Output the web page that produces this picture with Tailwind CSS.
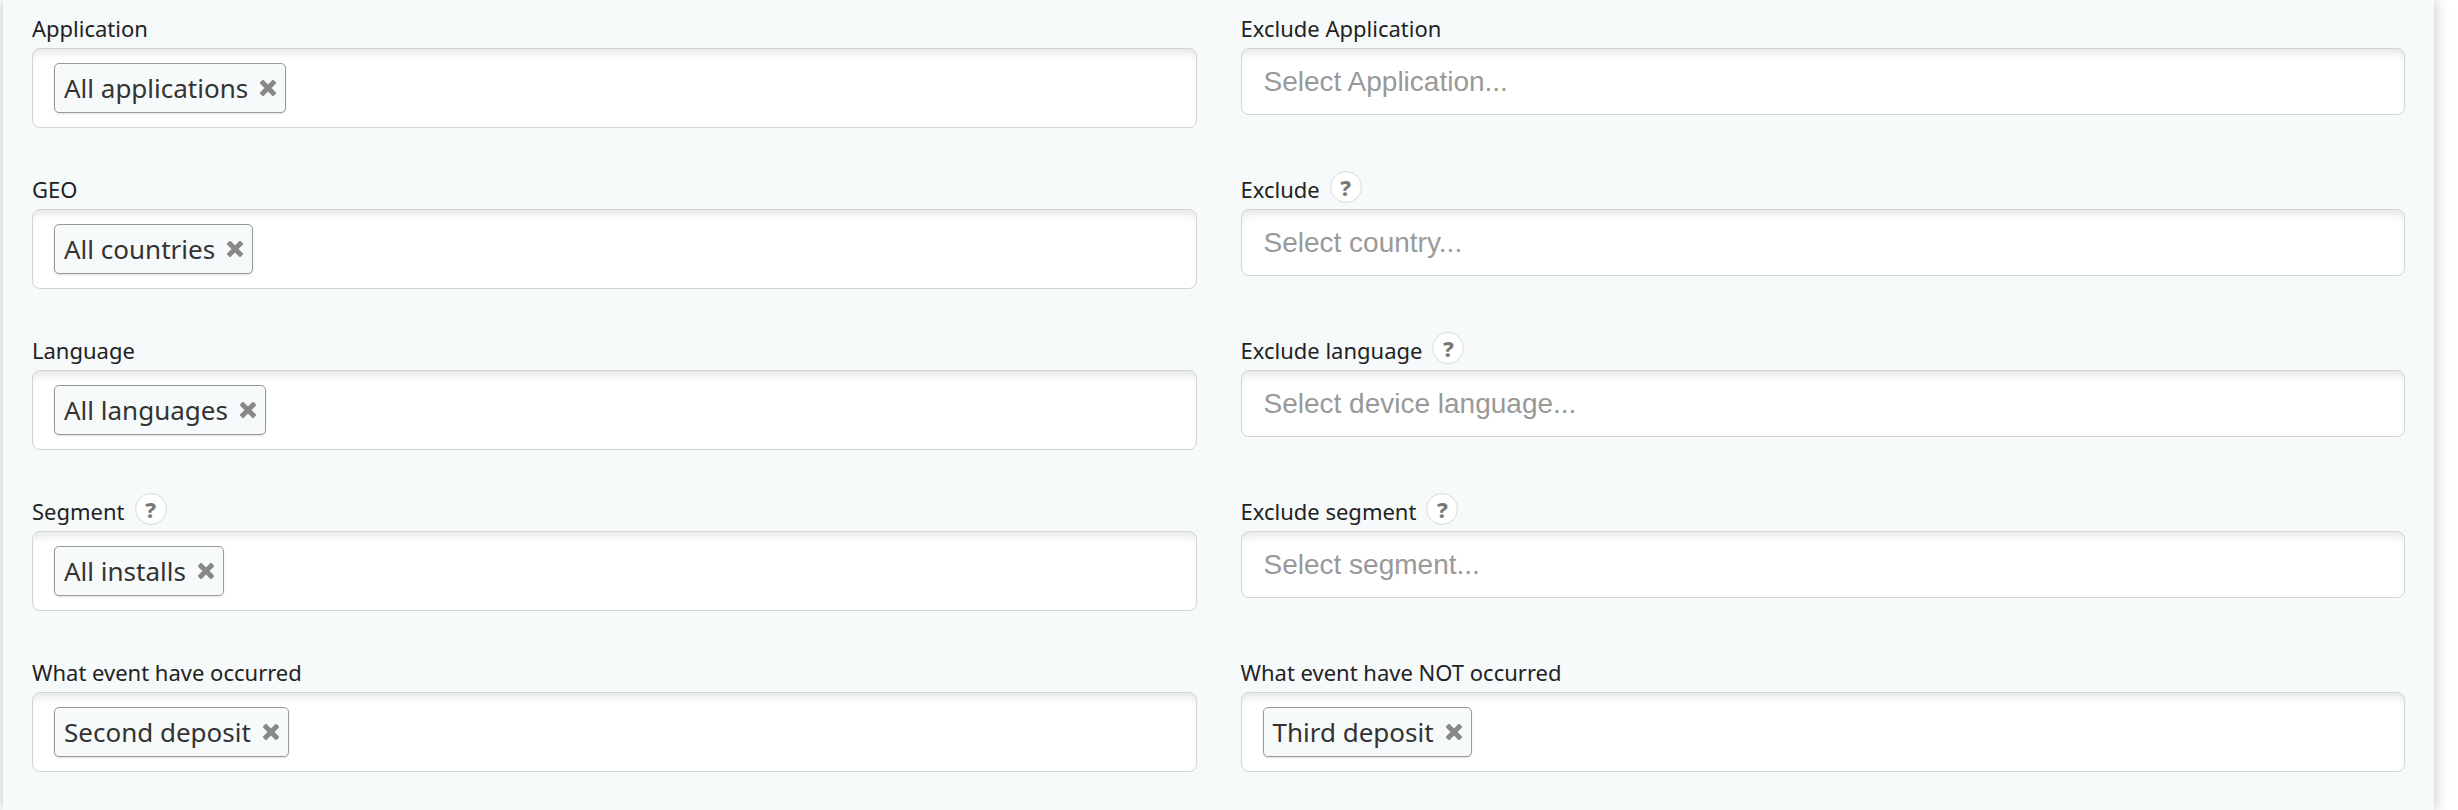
<!DOCTYPE html>
<html lang="en">
<head>
<meta charset="utf-8">
<title>Targeting</title>
<script src="https://cdn.jsdelivr.net/npm/@tailwindcss/browser@4"></script>
</head>
<body class="bg-white pr-6 pl-[3px] font-['Noto_Sans',sans-serif] text-[#222]">
<svg class="hidden">
  <symbol id="x" viewBox="0 0 16 16"><path d="M3 3L13 13M13 3L3 13" stroke="#888" stroke-width="5" stroke-linecap="square" stroke-linejoin="round" fill="none"/></symbol>
</svg>
<form id="form" class="grid min-h-screen grid-cols-2 content-start gap-x-11 gap-y-[41px] bg-[#f6fafb] px-[29px] pt-2 pb-9 shadow-[0_0_14px_rgba(0,0,0,0.25)]"></form>

<template id="chipField">
  <div>
    <div class="flex h-10 items-center gap-[10px] text-[22px] leading-8"><label></label></div>
    <div class="flex h-20 items-center rounded-lg border border-[#cfd4d5] bg-white px-[21px] shadow-[inset_0_10px_8px_-6px_rgba(0,0,0,0.1)]">
      <span class="flex h-[50px] shrink-0 items-center gap-3 rounded-[5px] border border-[#999] bg-[#f6fafb] px-[9px] text-[26px] leading-9 text-[#333] shadow-[0_1px_2px_rgba(0,0,0,0.12)]">
        <span data-text></span>
        <button type="button" class="size-4"><svg class="size-4"><use href="#x"/></svg></button>
      </span>
      <input type="text" class="ml-2 h-12 min-w-0 flex-1 bg-transparent text-[26px] outline-none">
    </div>
  </div>
</template>
<template id="emptyField">
  <div>
    <div class="flex h-10 items-center gap-[10px] text-[22px] leading-8"><label></label></div>
    <input type="text" class="block h-[67px] w-full rounded-lg border border-[#cfd4d5] bg-white px-[22px] font-['Liberation_Sans',sans-serif] text-[28px] shadow-[inset_0_10px_8px_-6px_rgba(0,0,0,0.1)] outline-none placeholder:text-[#999]">
  </div>
</template>
<template id="help">
  <button type="button" aria-label="Help" class="mb-1 flex size-8 items-center justify-center rounded-full border border-[#d8dcdd] bg-white font-['Noto_Sans',sans-serif] text-[22px] leading-none font-extrabold text-[#777]">?</button>
</template>
<script>
const fields = [
  { label: 'Application', chip: 'All applications' },
  { label: 'Exclude Application', hint: 'Select Application...' },
  { label: 'GEO', chip: 'All countries' },
  { label: 'Exclude', hint: 'Select country...', help: true },
  { label: 'Language', chip: 'All languages' },
  { label: 'Exclude language', hint: 'Select device language...', help: true },
  { label: 'Segment', chip: 'All installs', help: true },
  { label: 'Exclude segment', hint: 'Select segment...', help: true },
  { label: 'What event have occurred', chip: 'Second deposit' },
  { label: 'What event have NOT occurred', chip: 'Third deposit' },
];
const form = document.getElementById('form');
fields.forEach((f, i) => {
  const node = document.getElementById(f.chip ? 'chipField' : 'emptyField').content.cloneNode(true);
  const label = node.querySelector('label');
  const input = node.querySelector('input');
  label.textContent = f.label;
  label.htmlFor = input.id = 'field' + i;
  if (f.chip) {
    node.querySelector('[data-text]').textContent = f.chip;
    node.querySelector('button').setAttribute('aria-label', 'Remove ' + f.chip);
  } else {
    input.placeholder = f.hint;
  }
  if (f.help) label.after(document.getElementById('help').content.cloneNode(true));
  form.append(node);
});
</script>
</body>
</html>
